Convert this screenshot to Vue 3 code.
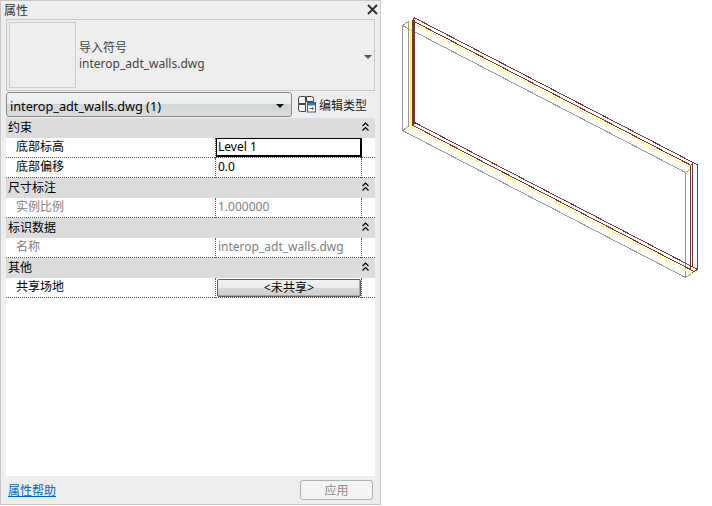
<template>
  <div class="page">
    <div class="panel">
      <div class="title-bar">
        <span>属性</span>
        <svg class="close" width="11" height="11" viewBox="0 0 11 11">
          <path d="M1 1 L10 10 M10 1 L1 10" stroke="#333" stroke-width="2" fill="none" />
        </svg>
      </div>

      <div class="type-preview">
        <div class="thumb"></div>
        <div class="type-text">
          <div>导入符号</div>
          <div>interop_adt_walls.dwg</div>
        </div>
        <span class="preview-arrow"></span>
      </div>

      <div class="selector-row">
        <div class="selector">
          <span>interop_adt_walls.dwg (1)</span>
          <span class="selector-arrow"></span>
        </div>
        <div class="edit-type">
          <svg width="18" height="17" viewBox="0 0 18 17">
            <path d="M0.5 2.5 Q0.5 0.5 2.5 0.5 H7.5 V7.5 H0.5 Z M0.5 8.5 H7.5 V15.5 H2.5 Q0.5 15.5 0.5 13.5 Z M8.5 0.5 H13.5 Q15.5 0.5 15.5 2.5 V5.5 H8.5 Z" fill="#f4f4f4" stroke="#444" />
            <rect x="9.5" y="6.5" width="8" height="9.5" fill="#fff" stroke="#2f5f8f" />
            <rect x="10" y="7" width="7" height="2.5" fill="#3c78b4" />
            <path d="M11.5 12.5 H15.5 M14 11 L15.5 12.5 L14 14" fill="none" stroke="#666" />
          </svg>
          <span>编辑类型</span>
        </div>
      </div>

      <div class="grid">
        <template v-for="group in groups" :key="group.name">
          <div class="group-head">
            <span>{{ group.name }}</span>
            <svg width="7" height="10" viewBox="0 0 7 10">
              <path d="M0.5 4 L3.5 1 L6.5 4 M0.5 8.5 L3.5 5.5 L6.5 8.5" fill="none" stroke="#000" stroke-width="1.2" />
            </svg>
          </div>
          <div v-for="row in group.rows" :key="row.label" class="row" :class="{ muted: row.muted }">
            <div class="label">{{ row.label }}</div>
            <div class="value">
              <button v-if="row.button" class="share-btn">{{ row.value }}</button>
              <div v-else class="value-text" :class="{ active: row.active }">{{ row.value }}</div>
            </div>
            <div class="tail"></div>
          </div>
        </template>
      </div>

      <div class="footer">
        <a class="help">属性帮助</a>
        <button class="apply">应用</button>
      </div>
    </div>

    <div class="canvas">
      <svg width="331" height="506" viewBox="381 0 331 506" shape-rendering="crispEdges">
        <g fill="none" stroke="#999">
          <path d="M402.5 130.5 V25.5 L408.5 21.5 V126" />
          <path d="M402.5 25.5 L685.5 172.5 V277.5 L402.5 130.5 L408.5 126" />
          <path d="M685.5 172.5 L692.5 168 M685.5 277.5 L692.5 273" />
        </g>
        <g fill="none" stroke="#ffff70">
          <path d="M410.5 126.5 V22 L692.5 169 V273.6 L410.5 127" />
        </g>
        <g fill="none" stroke="#7b3535">
          <path d="M412.5 20.7 L414.5 17.8 L697.5 164.8 V269.4 L692.5 272.5" />
          <path d="M412.5 20.7 L690.5 165.1 V270" />
          <path d="M690.5 165.1 L692.5 164 V267" />
          <path d="M412.5 125.2 L415 122.7 L697.5 269.4" />
          <path d="M412.5 125.2 L692.5 270.6" />
        </g>
        <rect x="412" y="20" width="3.4" height="104" fill="#7b3535" />
      </svg>
    </div>
  </div>
</template>

<script setup>
const groups = [
  {
    name: '约束',
    rows: [
      { label: '底部标高', value: 'Level 1', active: true },
      { label: '底部偏移', value: '0.0' }
    ]
  },
  {
    name: '尺寸标注',
    rows: [{ label: '实例比例', value: '1.000000', muted: true }]
  },
  {
    name: '标识数据',
    rows: [{ label: '名称', value: 'interop_adt_walls.dwg', muted: true }]
  },
  {
    name: '其他',
    rows: [{ label: '共享场地', value: '<未共享>', button: true }]
  }
]
</script>

<style>
html, body {
  margin: 0;
  background: #fff;
}
</style>

<style scoped>
.page {
  display: flex;
  width: 712px;
  height: 506px;
  overflow: hidden;
  font-family: "Noto Sans", "Noto Sans CJK SC", sans-serif;
  font-size: 12px;
  color: #000;
}

.panel {
  display: flex;
  flex-direction: column;
  box-sizing: border-box;
  width: 381px;
  height: 505px;
  padding: 0 5px;
  background: #eeeeee;
  border: 1px solid #c8c8c8;
}

.title-bar {
  display: flex;
  align-items: center;
  justify-content: space-between;
  height: 17px;
  margin-left: -2px;
  color: #333;
  line-height: 17px;
}

.title-bar span {
  padding-top: 2px;
}

.close {
  margin-right: -3px;
}

.type-preview {
  position: relative;
  display: flex;
  align-items: center;
  box-sizing: border-box;
  height: 72px;
  margin-top: 1px;
  padding: 2px;
  border: 1px solid #c8c8c8;
}

.thumb {
  box-sizing: border-box;
  width: 67px;
  height: 66px;
  border: 1px solid #cccccc;
}

.type-text {
  margin-left: 3px;
  color: #444;
  line-height: 16px;
  padding-top: 2px;
}

.preview-arrow {
  position: absolute;
  right: 2px;
  top: 35px;
  border: 4px solid transparent;
  border-top: 4px solid #555;
  border-bottom: 0;
}

.selector-row {
  display: flex;
  align-items: center;
  height: 25px;
  margin-top: 1px;
}

.selector {
  display: flex;
  align-items: center;
  justify-content: space-between;
  box-sizing: border-box;
  width: 286px;
  height: 25px;
  padding: 2px 7px 0 3px;
  border: 1px solid #8a8a8a;
  border-radius: 3px;
  background: linear-gradient(#f3f5f5 0%, #e9ecec 49%, #d3d7d7 50%, #d8dcdc 100%);
  font-size: 12.7px;
}

.selector-arrow {
  border: 4px solid transparent;
  border-top: 4px solid #000;
  border-bottom: 0;
}

.edit-type {
  display: flex;
  align-items: center;
  gap: 3px;
  margin-left: 6px;
  color: #222;
}

.edit-type svg {
  flex: none;
}

.grid {
  display: flex;
  flex-direction: column;
  flex: 1;
  margin-top: 1px;
  width: 369px;
  background: #fff;
}

.group-head {
  display: flex;
  align-items: center;
  justify-content: space-between;
  flex: none;
  box-sizing: border-box;
  height: 20px;
  padding: 0 6px 2px 2px;
  background: #dcdcdc;
}

.row {
  display: flex;
  flex: none;
  height: 20px;
  box-sizing: border-box;
  border-bottom: 1px dotted #555;
  line-height: 18px;
}

.label {
  width: 209px;
  padding-left: 10px;
  box-sizing: border-box;
}

.value {
  box-sizing: border-box;
  width: 147px;
  height: 20px;
  padding: 0 0 1px 0;
  border-left: 1px dotted #555;
  border-right: 1px dotted #555;
}

.value-text {
  padding-left: 2px;
}

.value-text.active {
  box-sizing: border-box;
  height: 19px;
  margin-right: -1px;
  border: 1px solid #000;
  border-width: 1px 2px 2px 1px;
  padding-left: 1px;
  line-height: 16px;
}

.muted .label,
.muted .value-text {
  color: #808080;
}

.share-btn {
  display: block;
  box-sizing: border-box;
  width: 144px;
  height: 18px;
  margin: 1px 0 0 1px;
  padding: 0;
  border: 1px solid #606060;
  border-radius: 2px;
  box-shadow: inset -1px -1px 0 #a8a8a8;
  background: linear-gradient(#f2f2f2 0%, #ebebeb 49%, #d8d8d8 50%, #cfcfcf 100%);
  font: inherit;
  line-height: 14px;
  letter-spacing: 0.2px;
  color: #000;
}

.footer {
  display: flex;
  align-items: center;
  justify-content: space-between;
  flex: none;
  height: 28px;
  padding: 0 2px;
}

.help {
  color: #0066cc;
  text-decoration: underline;
}

.apply {
  box-sizing: border-box;
  width: 73px;
  height: 20px;
  padding: 0;
  border: 1px solid #adb2b5;
  border-radius: 3px;
  background: #f4f4f4;
  font: inherit;
  color: #8a8a8a;
}

.canvas {
  flex: 1;
}

.canvas svg {
  display: block;
}
</style>
